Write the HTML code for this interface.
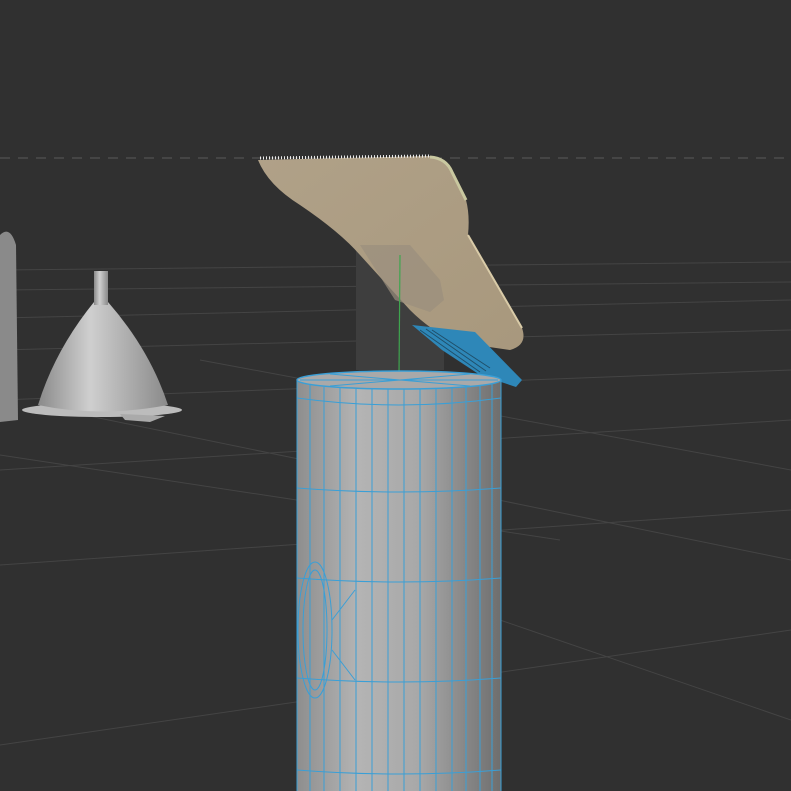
<!DOCTYPE html>
<html><head><style>
html,body{margin:0;padding:0;background:#303030;width:791px;height:791px;overflow:hidden}
</style></head><body>
<svg width="791" height="791" viewBox="0 0 791 791" xmlns="http://www.w3.org/2000/svg">
<defs>
<linearGradient id="cyl" x1="0" x2="1" y1="0" y2="0">
<stop offset="0" stop-color="#8e8e8e"/><stop offset="0.3" stop-color="#b4b4b4"/><stop offset="0.6" stop-color="#a8a8a8"/><stop offset="1" stop-color="#6e6e6e"/>
</linearGradient>
<linearGradient id="fun" x1="0" x2="1">
<stop offset="0" stop-color="#8a8a8a"/><stop offset="0.4" stop-color="#cfcfcf"/><stop offset="1" stop-color="#8a8a8a"/>
</linearGradient>
<linearGradient id="blade" x1="0" x2="1" y1="0" y2="1">
<stop offset="0" stop-color="#b0a188"/><stop offset="1" stop-color="#a8987d"/>
</linearGradient>
</defs>
<rect width="791" height="791" fill="#303030"/>
<g stroke="#444" stroke-width="1" fill="none">
<line x1="0" y1="270" x2="791" y2="262"/>
<line x1="0" y1="290" x2="791" y2="282"/>
<line x1="0" y1="318" x2="791" y2="300"/>
<line x1="0" y1="350" x2="791" y2="330"/>
<line x1="0" y1="400" x2="791" y2="370"/>
<line x1="0" y1="470" x2="791" y2="420"/>
<line x1="0" y1="565" x2="791" y2="510"/>
<line x1="0" y1="745" x2="791" y2="630"/>
<line x1="0" y1="455" x2="560" y2="540"/>
<line x1="60" y1="410" x2="791" y2="560"/>
<line x1="200" y1="360" x2="791" y2="470"/>
<line x1="500" y1="620" x2="791" y2="720"/>
</g>
<line x1="0" y1="158" x2="791" y2="158" stroke="#5a5a5a" stroke-dasharray="10,8"/>
<path d="M0 235 Q10 225 16 245 L18 420 L0 422 Z" fill="#8a8a8a"/>
<ellipse cx="102" cy="410" rx="80" ry="7" fill="#bcbcbc"/>
<path d="M120 414 L165 416 L150 422 L125 420 Z" fill="#aaa"/>
<path d="M94 302 Q55 350 38 405 Q100 418 168 405 Q150 350 108 302 Z" fill="url(#fun)"/>
<rect x="94" y="271" width="14" height="34" fill="url(#fun)"/>
<rect x="356" y="245" width="88" height="125" fill="#3e3e3e"/>
<path d="M258 160 L430 156 Q446 158 452 172 L466 200 Q470 215 468 235 L522 328 Q528 345 510 350 L455 342 Q430 330 410 310 L360 255 Q340 232 300 205 Q268 185 258 160 Z" fill="url(#blade)"/>
<path d="M360 245 L410 245 L440 280 L444 300 L430 312 L395 300 Z" fill="#9a8f7e" opacity="0.7"/>
<path d="M260 158 L430 156" stroke="#eee" stroke-width="3" stroke-dasharray="1,2"/>
<path d="M430 157 Q446 158 452 172 L466 200" stroke="#c9c8a0" stroke-width="3" fill="none"/>
<path d="M468 235 L522 328" stroke="#d9cba8" stroke-width="2" fill="none"/>
<line x1="400" y1="255" x2="399" y2="375" stroke="#3fa54f" stroke-width="1.2"/>
<path d="M412 325 L475 332 L522 380 L516 387 L480 375 L442 350 Z" fill="#2e87b8"/>
<g stroke="#1f4f6a" stroke-width="1"><line x1="420" y1="330" x2="480" y2="372"/><line x1="426" y1="329" x2="486" y2="371"/><line x1="432" y1="330" x2="490" y2="368"/></g>
<rect x="297" y="380" width="204" height="420" fill="url(#cyl)"/>
<ellipse cx="399" cy="380" rx="102" ry="9" fill="#a9a9a9" stroke="#3a9fd6" stroke-width="1.5"/>
<g stroke="#3a9fd6" stroke-width="1" fill="none">
<line x1="297" y1="380" x2="297" y2="791"/><line x1="501" y1="380" x2="501" y2="791"/>
<line x1="310" y1="385" x2="310" y2="791"/><line x1="324" y1="387" x2="324" y2="791"/>
<line x1="340" y1="388" x2="340" y2="791"/><line x1="356" y1="389" x2="356" y2="791"/>
<line x1="372" y1="389" x2="372" y2="791"/><line x1="388" y1="389" x2="388" y2="791"/>
<line x1="404" y1="389" x2="404" y2="791"/><line x1="420" y1="389" x2="420" y2="791"/>
<line x1="436" y1="388" x2="436" y2="791"/><line x1="452" y1="387" x2="452" y2="791"/>
<line x1="466" y1="386" x2="466" y2="791"/><line x1="480" y1="385" x2="480" y2="791"/>
<line x1="492" y1="383" x2="492" y2="791"/>
<path d="M297 398 Q399 412 501 398"/>
<path d="M297 488 Q399 496 501 488"/>
<path d="M297 578 Q399 586 501 578"/>
<path d="M297 678 Q399 686 501 678"/>
<path d="M297 770 Q399 778 501 770"/>
<ellipse cx="315" cy="630" rx="17" ry="68"/>
<ellipse cx="315" cy="630" rx="12" ry="60"/>
<path d="M332 620 L355 590 M332 650 L355 680"/>
<path d="M300 380 L498 380 M330 374 L470 386 M330 386 L470 374"/>
</g>
</svg>
</body></html>
